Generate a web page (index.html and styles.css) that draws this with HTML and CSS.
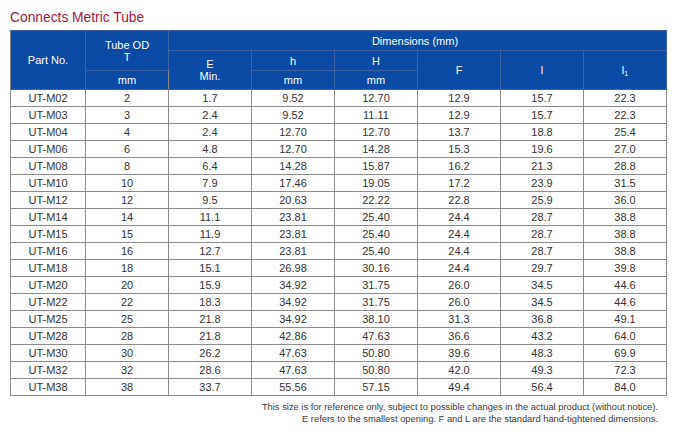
FILE: index.html
```html
<!DOCTYPE html>
<html>
<head>
<meta charset="utf-8">
<link rel="stylesheet" href="styles.css">
</head>
<body>
<div class="page">
  <h1 class="title">Connects Metric Tube</h1>
  <table class="spec">
    <colgroup>
      <col class="c-part"><col class="c"><col class="c"><col class="c"><col class="c"><col class="c"><col class="c"><col class="c">
    </colgroup>
    <thead>
      <tr class="h1">
        <th rowspan="3">Part No.</th>
        <th rowspan="2">Tube OD<br>T</th>
        <th colspan="6">Dimensions (mm)</th>
      </tr>
      <tr class="h2">
        <th rowspan="2">E<br>Min.</th>
        <th>h</th>
        <th>H</th>
        <th rowspan="2">F</th>
        <th rowspan="2">l</th>
        <th rowspan="2">l<sub>1</sub></th>
      </tr>
      <tr class="h3">
        <th>mm</th>
        <th>mm</th>
        <th>mm</th>
      </tr>
    </thead>
    <tbody>
      <tr><td>UT-M02</td><td>2</td><td>1.7</td><td>9.52</td><td>12.70</td><td>12.9</td><td>15.7</td><td>22.3</td></tr>
      <tr><td>UT-M03</td><td>3</td><td>2.4</td><td>9.52</td><td>11.11</td><td>12.9</td><td>15.7</td><td>22.3</td></tr>
      <tr><td>UT-M04</td><td>4</td><td>2.4</td><td>12.70</td><td>12.70</td><td>13.7</td><td>18.8</td><td>25.4</td></tr>
      <tr><td>UT-M06</td><td>6</td><td>4.8</td><td>12.70</td><td>14.28</td><td>15.3</td><td>19.6</td><td>27.0</td></tr>
      <tr><td>UT-M08</td><td>8</td><td>6.4</td><td>14.28</td><td>15.87</td><td>16.2</td><td>21.3</td><td>28.8</td></tr>
      <tr><td>UT-M10</td><td>10</td><td>7.9</td><td>17.46</td><td>19.05</td><td>17.2</td><td>23.9</td><td>31.5</td></tr>
      <tr><td>UT-M12</td><td>12</td><td>9.5</td><td>20.63</td><td>22.22</td><td>22.8</td><td>25.9</td><td>36.0</td></tr>
      <tr><td>UT-M14</td><td>14</td><td>11.1</td><td>23.81</td><td>25.40</td><td>24.4</td><td>28.7</td><td>38.8</td></tr>
      <tr><td>UT-M15</td><td>15</td><td>11.9</td><td>23.81</td><td>25.40</td><td>24.4</td><td>28.7</td><td>38.8</td></tr>
      <tr><td>UT-M16</td><td>16</td><td>12.7</td><td>23.81</td><td>25.40</td><td>24.4</td><td>28.7</td><td>38.8</td></tr>
      <tr><td>UT-M18</td><td>18</td><td>15.1</td><td>26.98</td><td>30.16</td><td>24.4</td><td>29.7</td><td>39.8</td></tr>
      <tr><td>UT-M20</td><td>20</td><td>15.9</td><td>34.92</td><td>31.75</td><td>26.0</td><td>34.5</td><td>44.6</td></tr>
      <tr><td>UT-M22</td><td>22</td><td>18.3</td><td>34.92</td><td>31.75</td><td>26.0</td><td>34.5</td><td>44.6</td></tr>
      <tr><td>UT-M25</td><td>25</td><td>21.8</td><td>34.92</td><td>38.10</td><td>31.3</td><td>36.8</td><td>49.1</td></tr>
      <tr><td>UT-M28</td><td>28</td><td>21.8</td><td>42.86</td><td>47.63</td><td>36.6</td><td>43.2</td><td>64.0</td></tr>
      <tr><td>UT-M30</td><td>30</td><td>26.2</td><td>47.63</td><td>50.80</td><td>39.6</td><td>48.3</td><td>69.9</td></tr>
      <tr><td>UT-M32</td><td>32</td><td>28.6</td><td>47.63</td><td>50.80</td><td>42.0</td><td>49.3</td><td>72.3</td></tr>
      <tr><td>UT-M38</td><td>38</td><td>33.7</td><td>55.56</td><td>57.15</td><td>49.4</td><td>56.4</td><td>84.0</td></tr>
    </tbody>
  </table>
  <div class="notes">
    <p>This size is for reference only, subject to possible changes in the actual product (without notice).</p>
    <p>E refers to the smallest opening. F and L are the standard hand-tightened dimensions.</p>
  </div>
</div>
</body>
</html>
```

FILE: styles.css
```css
html, body {
  margin: 0;
  padding: 0;
  background: #ffffff;
}

.page {
  width: 656px;
  padding: 9px 0 0 10px;
  font-family: "Liberation Sans", Arial, sans-serif;
}

.title {
  margin: 0;
  height: 21px;
  font-size: 13.8px;
  font-weight: normal;
  line-height: 18px;
  color: #a3173d;
}

.spec {
  width: 656px;
  table-layout: fixed;
  border-collapse: collapse;
  font-size: 11px;
}

.c-part { width: 75px; }
.c { width: 83px; }

.spec th {
  background: #0b4aa5;
  color: #ffffff;
  font-weight: normal;
  border: 1px solid #3d63a4;
  padding: 0;
  line-height: 12px;
  text-align: center;
  vertical-align: middle;
}

.spec thead tr:first-child th {
  border-top-color: #3b5c94;
}

.spec th:first-child,
.spec td:first-child {
  border-left-color: #8a8a8a;
}

.spec .h1 th { height: 19px; }
.spec .h2 th { height: 19px; }
.spec .h3 th { height: 18px; }

.spec .h1 th[colspan] {
  text-align: right;
  padding-right: 208px;
}

.spec sub {
  font-size: 7px;
  vertical-align: -2px;
  line-height: 0;
}

.spec td {
  height: 16px;
  padding: 0;
  border: 1px solid #8c8c8c;
  color: #333333;
  text-align: center;
  line-height: 14px;
}

.notes {
  width: 648px;
  margin-top: 5px;
  text-align: right;
  font-size: 9.35px;
  line-height: 12px;
  color: #3a3a3a;
}

.notes p {
  margin: 0;
}
```
